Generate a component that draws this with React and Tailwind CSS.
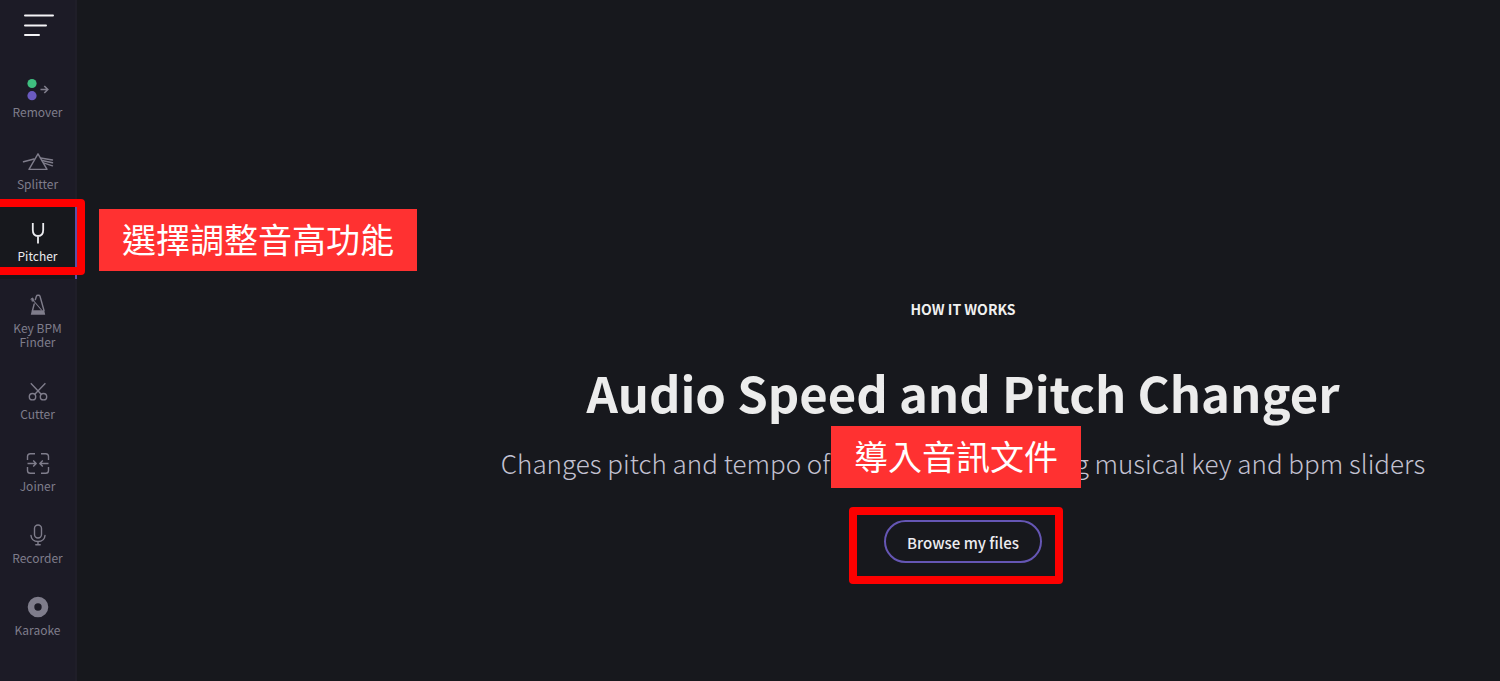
function Icon({ children }) {
  return (
    <svg
      className="w-8 h-6"
      viewBox="0 0 32 24"
      fill="none"
      stroke="currentColor"
      strokeWidth="1.4"
      strokeLinecap="round"
      strokeLinejoin="round"
      aria-hidden="true"
    >
      {children}
    </svg>
  )
}

const navItems = [
  {
    label: 'Remover',
    icon: (
      <Icon>
        <circle cx="10" cy="5.5" r="4.6" fill="#3fbf80" stroke="none" />
        <circle cx="10" cy="17.7" r="4.6" fill="#6a5ac0" stroke="none" />
        <path d="M18.5 11.5H25M22.3 8l3.5 3.5l-3.5 3.5" strokeWidth="1.6" strokeLinecap="butt" strokeLinejoin="miter" />
      </Icon>
    ),
  },
  {
    label: 'Splitter',
    icon: (
      <Icon>
        <path d="M16 3.8L25 19.4H7z" />
        <path d="M1.5 11.8L12 9M18.5 8L30.5 10M20 10.5L30.5 12.8M21.5 12.8L30.5 15.8" />
      </Icon>
    ),
  },
  {
    label: 'Pitcher',
    active: true,
    icon: (
      <Icon>
        <path d="M10.8 1v7c0 4 2 6 5.2 6s5.2-2 5.2-6V1M16 13.5V21.5" strokeWidth="1.8" strokeLinecap="butt" />
      </Icon>
    ),
  },
  {
    label: 'Key BPM Finder',
    icon: (
      <Icon>
        <path d="M12.2 10l-1.700 6.500M13.400 5.500l1-3.300q.3-1 1.500-1h.6q1.200 0 1.500 1L22 16.500" />
        <path d="M10 5L19.500 16" strokeWidth="1.1" />
        <path d="M9 4.800l1.800-1l1.400 2.600l-1.500 1.200z" fill="currentColor" strokeWidth="0.5" />
        <path d="M9.8 16.3h12.4l1 4.4H8.8z" fill="currentColor" stroke="none" />
      </Icon>
    ),
  },
  {
    label: 'Cutter',
    icon: (
      <Icon>
        <path d="M8.8 3.3L19.2 14.2M23.4 3.3L12.8 14.2" strokeLinecap="butt" />
        <circle cx="10.5" cy="16.7" r="3.2" />
        <circle cx="21.5" cy="16.7" r="3.2" />
      </Icon>
    ),
  },
  {
    label: 'Joiner',
    icon: (
      <Icon>
        <path d="M5.5 8V4.5q0-2.8 2.8-2.8H13M19 1.7h4.7q2.8 0 2.8 2.8V8M26.5 15v3.5q0 2.8-2.8 2.8H19M13 21.3H8.3q-2.8 0-2.8-2.8V15" strokeLinecap="butt" />
        <path d="M5.5 11.5H14M11.2 8.5l3 3l-3 3M26.5 11.5H18M20.8 8.5l-3 3l3 3" strokeLinecap="butt" />
      </Icon>
    ),
  },
  {
    label: 'Recorder',
    icon: (
      <Icon>
        <rect x="12.5" y="1" width="7" height="13" rx="3.5" />
        <path d="M9 11.5c.3 3.8 3 6 7 6s6.7-2.2 7-6M16 17.5v3M13.8 20.7h4.4" />
      </Icon>
    ),
  },
  {
    label: 'Karaoke',
    icon: (
      <Icon>
        <circle cx="16" cy="11" r="7" strokeWidth="6.6" />
      </Icon>
    ),
  },
]

function Callout({ className, children }) {
  return (
    <div
      className={`absolute h-[62px] px-[23px] pb-0.5 flex items-center bg-[#ff3131] text-white text-[34px] leading-none whitespace-nowrap ${className}`}
    >
      {children}
    </div>
  )
}

function NavItem({ item }) {
  return (
    <li className="relative">
      <a
        href="#"
        className={`flex flex-col items-center pt-[15px] pb-4 gap-[3px] border-r-2 ${
          item.active
            ? 'bg-[#17181d] border-[#5c50a6] text-[#ececf0]'
            : 'border-[#1f1e28] text-[#7f7d8b]'
        }`}
      >
        {item.icon}
        <span className="w-14 text-center text-xs leading-[14px]">{item.label}</span>
      </a>
      {item.active && (
        <>
          <div className="absolute -left-2 -top-2 w-[93px] h-[76px] border-8 border-[#fe0000] rounded" />
          <Callout className="left-[99px] top-0.5">選擇調整音高功能</Callout>
        </>
      )}
    </li>
  )
}

function Sidebar() {
  return (
    <aside className="w-[77px] shrink-0 flex flex-col bg-[#1c1b26] relative z-10">
      <button type="button" aria-label="Menu" className="h-[63px] pl-6 pt-3.5 flex items-start border-r-2 border-[#1f1e28]">
        <svg className="w-8 h-6" viewBox="0 0 32 24" fill="none" stroke="#f4f4f6" strokeWidth="2" strokeLinecap="round" aria-hidden="true">
          <path d="M1 1.5h28M1 11.5h21M1 21h14" />
        </svg>
      </button>
      <nav>
        <ul>
          {navItems.map((item) => (
            <NavItem key={item.label} item={item} />
          ))}
        </ul>
      </nav>
      <div className="flex-1 border-r-2 border-[#1f1e28]" />
    </aside>
  )
}

export default function App() {
  return (
    <div className="flex min-h-screen overflow-hidden bg-[#17181d] font-['Noto_Sans_CJK_TC','Noto_Sans',sans-serif]">
      <Sidebar />
      <main className="flex-1 pl-[349px] pt-[299px] flex flex-col items-center text-center">
        <h2 className="text-sm leading-5 font-bold text-[#f0f0f0]">HOW IT WORKS</h2>
        <h1 className="mt-[41px] text-[49px] leading-[64px] font-bold text-[#ececec] whitespace-nowrap">
          Audio Speed and Pitch Changer
        </h1>
        <div className="relative mt-[23px]">
          <p className="text-[26px] leading-8 font-light text-[#c3c2d2] whitespace-nowrap">
            Changes pitch and tempo of any song by changing musical key and bpm sliders
          </p>
          <Callout className="left-1/2 -ml-[132px] -top-[21px]">導入音訊文件</Callout>
        </div>
        <div className="relative mt-[41px]">
          <button type="button" className="h-[43px] px-[21px] pt-1 rounded-full border-2 border-[#6556b4] text-[15px] font-medium text-[#ececf0]">
            Browse my files
          </button>
          <div className="absolute -left-[35px] -right-[21px] -top-[13px] -bottom-[21px] border-8 border-[#fe0000] rounded pointer-events-none" />
        </div>
      </main>
    </div>
  )
}
